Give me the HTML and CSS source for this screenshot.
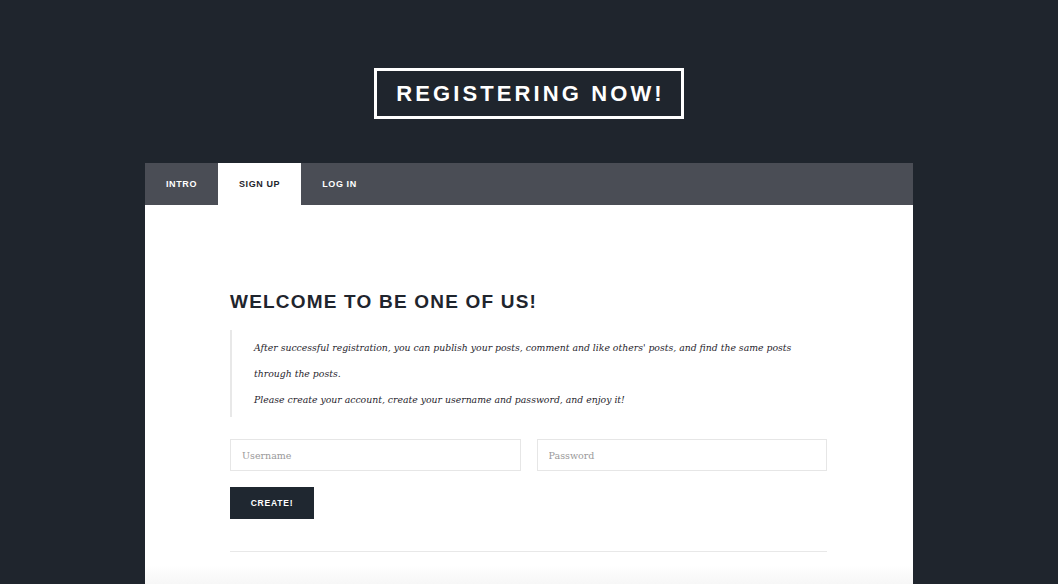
FILE: index.html
```html
<!DOCTYPE html>
<html>
<head>
<meta charset="utf-8">
<link rel="stylesheet" href="styles.css">
</head>
<body>
<div class="page">
  <header class="top">
    <h1 class="title">REGISTERING NOW!</h1>
  </header>
  <main class="panel">
    <nav class="tabs">
      <a class="tab">INTRO</a>
      <a class="tab active">SIGN UP</a>
      <a class="tab">LOG IN</a>
    </nav>
    <section class="content">
      <h2 class="heading">WELCOME TO BE ONE OF US!</h2>
      <blockquote class="quote">
        <p>After successful registration, you can publish your posts, comment and like others' posts, and find the same posts through the posts.</p>
        <p>Please create your account, create your username and password, and enjoy it!</p>
      </blockquote>
      <form class="form">
        <div class="fields">
          <input class="field" type="text" placeholder="Username">
          <input class="field" type="password" placeholder="Password">
        </div>
        <button class="btn" type="button">CREATE!</button>
      </form>
      <hr class="rule">
    </section>
  </main>
</div>
</body>
</html>
```
FILE: styles.css
```css
* { box-sizing: border-box; }
html, body { margin: 0; padding: 0; }
body {
  background: #1f252d;
  font-family: "Liberation Sans", Arial, sans-serif;
  height: 584px;
  overflow: hidden;
}
.page {
  display: flex;
  flex-direction: column;
  align-items: center;
  padding-top: 68px;
}
.top { display: flex; justify-content: center; }
.title {
  margin: 0;
  border: 3px solid #ffffff;
  color: #ffffff;
  font-size: 22px;
  font-weight: bold;
  letter-spacing: 3.1px;
  line-height: 45px;
  height: 51px;
  width: 310px;
  text-align: center;
  padding-left: 3px;
}
.panel {
  margin-top: 44px;
  width: 768px;
  background: #ffffff;
}
.tabs {
  display: flex;
  background: #4a4d55;
  height: 42px;
}
.tab {
  display: flex;
  align-items: center;
  padding: 0 21px;
  color: #ffffff;
  font-size: 9px;
  font-weight: bold;
  letter-spacing: 0.6px;
}
.tab.active {
  background: #ffffff;
  color: #1f252d;
}
.content {
  padding: 86px 86px 40px 85px;
  background: linear-gradient(to bottom, #ffffff 0, #ffffff 360px, #f6f6f6 380px);
  min-height: 400px;
}
.heading {
  margin: 0;
  color: #1f252d;
  font-size: 19px;
  font-weight: bold;
  letter-spacing: 1.2px;
  line-height: 22px;
}
.quote {
  margin: 17px 0 0 0;
  border-left: 2px solid #e8e8e8;
  padding: 5px 0 5px 22px;
  font-family: "DejaVu Serif", Georgia, serif;
  font-style: italic;
  font-size: 9.3px;
  color: #1f252d;
}
.quote p { margin: 0; line-height: 25.8px; }
.form { margin-top: 22px; }
.fields {
  display: flex;
  gap: 16px;
}
.field {
  flex: 1;
  height: 32px;
  border: 1px solid #e6e6e6;
  padding: 0 11px;
  font-family: "DejaVu Serif", Georgia, serif;
  font-size: 9.5px;
  color: #333;
  background: #fff;
  outline: none;
}
.field::placeholder { color: #999999; }
.btn {
  margin-top: 16px;
  display: block;
  width: 84px;
  height: 32px;
  border: 0;
  background: #1f2730;
  color: #ffffff;
  font-family: "Liberation Sans", Arial, sans-serif;
  font-size: 8.5px;
  font-weight: bold;
  letter-spacing: 0.8px;
  padding: 0;
}
.rule {
  margin: 32px 0 0 0;
  border: 0;
  border-top: 1px solid #e8e8e8;
}
```
